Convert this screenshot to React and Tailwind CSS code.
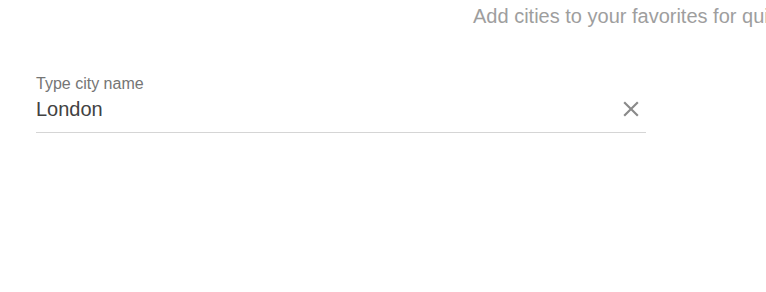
import React, { useState } from 'react';

const CloseIcon = () => (
  <svg viewBox="0 0 24 24" className="w-[26px] h-[26px]" fill="#8a8a8a">
    <path d="M19 6.41 17.59 5 12 10.59 6.41 5 5 6.41 10.59 12 5 17.59 6.41 19 12 13.41 17.59 19 19 17.59 13.41 12z" />
  </svg>
);

const App = () => {
  const [city, setCity] = useState('London');

  return (
    <div className="w-[766px] h-[292px] overflow-hidden bg-white" style={{ fontFamily: '"Liberation Sans", Arial, sans-serif' }}>
      <div className="pl-[473px] pt-[4px] whitespace-nowrap text-[20px] leading-[24px] text-[#9e9e9e]">
        Add cities to your favorites for quick access
      </div>
      <div className="ml-[36px] mt-[47px] w-[610px]">
        <label className="block text-[16px] leading-[18px] text-[#757575]">Type city name</label>
        <div className="flex items-center border-b border-[#d5d5d5] pt-[1px] pb-[8px]">
          <input
            value={city}
            onChange={e => setCity(e.target.value)}
            className="flex-1 outline-none bg-transparent text-[20px] leading-[30px] text-[#424242]"
          />
          <button onClick={() => setCity('')} className="mr-[2px] flex items-center">
            <CloseIcon />
          </button>
        </div>
      </div>
    </div>
  );
};

export default App;
